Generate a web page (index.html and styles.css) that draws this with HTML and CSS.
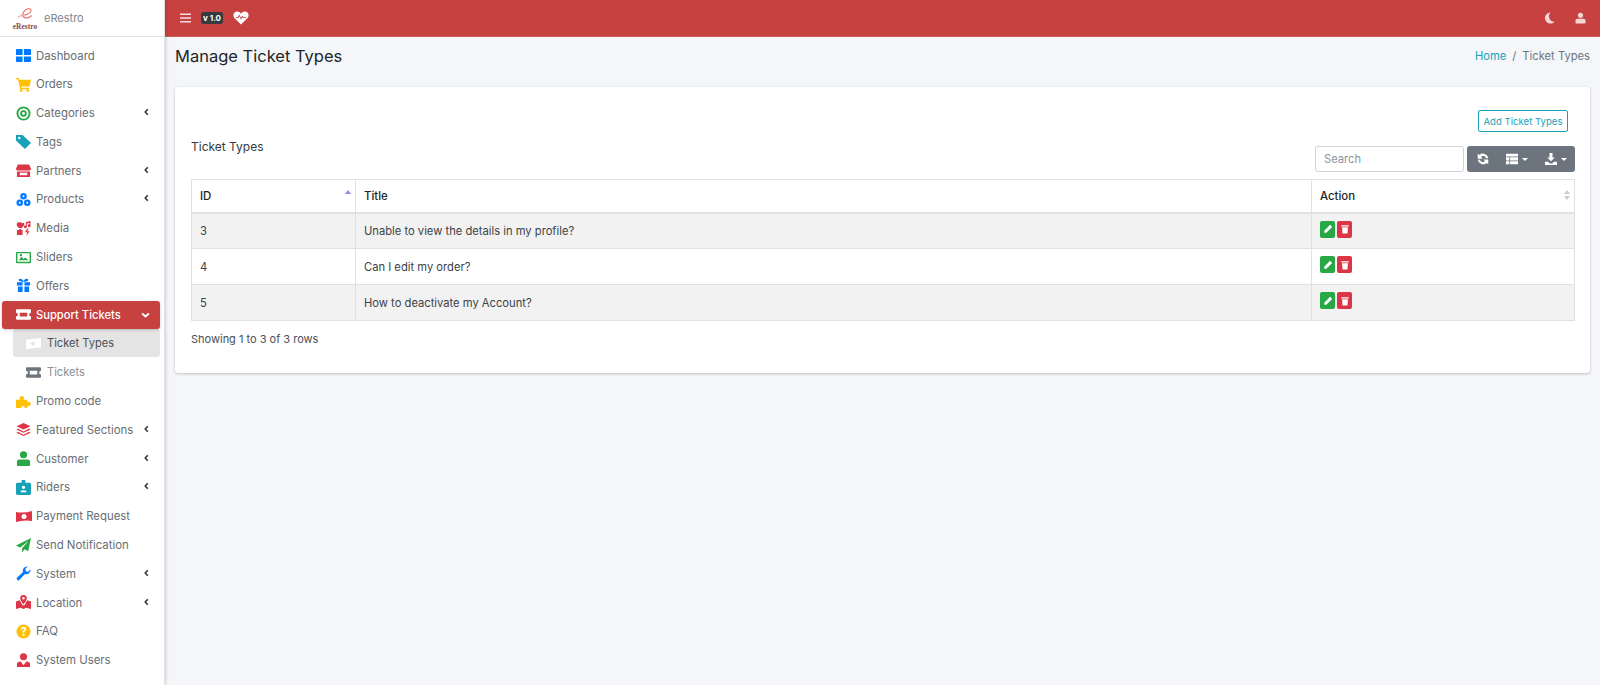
FILE: index.html
```html
<!DOCTYPE html>
<html lang="en">
<head>
<meta charset="utf-8">
<title>Manage Ticket Types</title>
<link rel="stylesheet" href="styles.css">
</head>
<body>
<aside class="sidebar">
  <div class="brand">
    <div class="logo">
      <svg class="logo-mark" viewBox="0 0 24 18"><path d="M6 10c5 1 12-1 13-5 .5-3-4-4-7-1-4 3-5 9 0 10 3 .5 6-1 8-3" fill="none" stroke="#e77a79" stroke-width="1.600"/><path d="M2 13l9-3.500" stroke="#f3b8b7" stroke-width="1.600"/></svg>
      <span class="logo-text">eRestro</span>
    </div>
    <span class="brand-name">eRestro</span>
  </div>
  <nav class="nav">
    <a class="item"><svg class="ic blue" viewBox="0 0 16 16"><path d="M0 2q0-1 1-1h6v6.500H0zM8.500 1H15q1 0 1 1v5.500H8.500zM0 9h7v6H1q-1 0-1-1zM8.500 9H16v5q0 1-1 1H8.500z"/></svg><span>Dashboard</span></a>
    <a class="item"><svg class="ic yellow" viewBox="0 0 16 16"><path d="M0 1h3l.500 2H16l-1.500 7H5.500l.3 1.500H14V13H4.500L2 2.500H0z"/><circle cx="5.500" cy="14.500" r="1.500"/><circle cx="12.500" cy="14.500" r="1.500"/></svg><span>Orders</span></a>
    <a class="item"><svg class="ic green" viewBox="0 0 16 16"><path fill-rule="evenodd" d="M8 .500a7.500 7.500 0 1 1 0 15 7.500 7.500 0 0 1 0-15zm0 2a5.500 5.500 0 1 0 0 11 5.500 5.500 0 0 0 0-11zm0 2a3.500 3.500 0 1 1 0 7 3.500 3.500 0 0 1 0-7zm0 2a1.500 1.500 0 1 0 0 3 1.500 1.500 0 0 0 0-3z"/></svg><span>Categories</span><svg class="chev" viewBox="0 0 8 12"><path d="M6 1.500L2 6l4 4.500" fill="none" stroke-width="2.600"/></svg></a>
    <a class="item"><svg class="ic teal" viewBox="0 0 16 16"><path fill-rule="evenodd" d="M0 1h7l9 8.500L9.500 16 0 7zm3.500 2a1.300 1.300 0 1 0 0 2.600 1.300 1.300 0 0 0 0-2.600z"/></svg><span>Tags</span></a>
    <a class="item"><svg class="ic red" viewBox="0 0 16 16"><path d="M2 1.500h12L16 6q0 2-2 2H2Q0 8 0 6zM1 9h14v6H1zm3 1.500V13h8v-2.500z"/></svg><span>Partners</span><svg class="chev" viewBox="0 0 8 12"><path d="M6 1.500L2 6l4 4.500" fill="none" stroke-width="2.600"/></svg></a>
    <a class="item"><svg class="ic blue" viewBox="0 0 16 16"><path fill-rule="evenodd" d="M8 1a3.500 3.500 0 1 1 0 7 3.500 3.500 0 0 1 0-7zm0 2.500a1 1 0 1 0 0 2 1 1 0 0 0 0-2zM4 8a3.500 3.500 0 1 1 0 7 3.500 3.500 0 0 1 0-7zm0 2.500a1 1 0 1 0 0 2 1 1 0 0 0 0-2zM12 8a3.500 3.500 0 1 1 0 7 3.500 3.500 0 0 1 0-7zm0 2.500a1 1 0 1 0 0 2 1 1 0 0 0 0-2z"/></svg><span>Products</span><svg class="chev" viewBox="0 0 8 12"><path d="M6 1.500L2 6l4 4.500" fill="none" stroke-width="2.600"/></svg></a>
    <a class="item"><svg class="ic red" viewBox="0 0 16 16"><path d="M3.500 1.500C5 1 6 2 6.500 2.500 7 2 8 1 9 3c0 2-2.500 3.500-2.500 4.500L3 7.500 1 5C0 3 2 1 3.500 1.500zM10.500 1l5-1v5a1.500 1.500 0 1 1-1-1.300V2l-3 .6V6a1.500 1.500 0 1 1-1-1.300zM1 9.500h2l1-1h1l1 1h1V15H1zM12 8l-2.500 4H12l-1 4 3.500-5H12l1.500-3z"/></svg><span>Media</span></a>
    <a class="item"><svg class="ic green" viewBox="0 0 16 16"><path fill-rule="evenodd" d="M1 2h14q1 0 1 1v10q0 1-1 1H1q-1 0-1-1V3q0-1 1-1zm.5 1.500v9h13v-9zM3 11l3-4 2 2.500 2-1.500 3 3zm1-5.500a1.300 1.300 0 1 0 0-.1z"/></svg><span>Sliders</span></a>
    <a class="item"><svg class="ic blue" viewBox="0 0 16 16"><path d="M1 4.500h6V8H1zM9 4.500h6V8H9zM2 9h5v6H3q-1 0-1-1zM9 9h5v5q0 1-1 1H9zM8 4C6 4 3 4 3 2.200 3 .5 6 0 8 3.500 10 0 13 .5 13 2.200 13 4 10 4 8 4z"/></svg><span>Offers</span></a>
    <a class="item active"><svg class="ic white" viewBox="0 0 16 16"><path fill-rule="evenodd" d="M1 2.500h14q1 0 1 1V6a2 2 0 0 0 0 4v2.500q0 1-1 1H1q-1 0-1-1V10a2 2 0 0 0 0-4V3.500q0-1 1-1zm3 3.500v4h8V6z"/></svg><span>Support Tickets</span><svg class="chev open" viewBox="0 0 12 8"><path d="M1.500 2L6 6l4.500-4" fill="none" stroke-width="2.600"/></svg></a>
    <div class="sub">
      <a class="sub-item current"><svg class="ic white" viewBox="0 0 16 16"><path fill-rule="evenodd" d="M0 4l16-2v10L0 14zm8 2.200a2 2 0 1 0 0 3.800 2 2 0 0 0 0-3.800z"/></svg><span>Ticket Types</span></a>
      <a class="sub-item"><svg class="ic grey" viewBox="0 0 16 16"><path fill-rule="evenodd" d="M1 2.500h14q1 0 1 1V6a2 2 0 0 0 0 4v2.500q0 1-1 1H1q-1 0-1-1V10a2 2 0 0 0 0-4V3.500q0-1 1-1zm3 3.500v4h8V6z"/></svg><span>Tickets</span></a>
    </div>
    <a class="item"><svg class="ic yellow" viewBox="0 0 16 16"><path d="M0 6h4.500a2 2 0 1 1 3.500-3c.8.800.5 2.200 0 3h4v3.200a2 2 0 1 1 3 2.600 2 2 0 0 1-3 .700V15H9.500a2 2 0 0 0-3.500-1.500c-.5.500-.5 1 0 1.500H0z"/></svg><span>Promo code</span></a>
    <a class="item"><svg class="ic red" viewBox="0 0 16 16"><path d="M8 1l7.500 3.500L8 8 .5 4.500zM2 7l6 3 6-3 1.500 1L8 11.500.5 8zM2 10.500l6 3 6-3 1.500 1L8 15 .5 11.500z"/></svg><span>Featured Sections</span><svg class="chev" viewBox="0 0 8 12"><path d="M6 1.500L2 6l4 4.500" fill="none" stroke-width="2.600"/></svg></a>
    <a class="item"><svg class="ic green" viewBox="0 0 16 16"><circle cx="8" cy="4" r="3.800"/><path d="M3.500 9h9q2.500 0 2.500 2.500V15q0 1-1 1H2q-1 0-1-1v-3.500Q1 9 3.500 9z"/></svg><span>Customer</span><svg class="chev" viewBox="0 0 8 12"><path d="M6 1.500L2 6l4 4.500" fill="none" stroke-width="2.600"/></svg></a>
    <a class="item"><svg class="ic teal" viewBox="0 0 16 16"><path fill-rule="evenodd" d="M1.500 3H6V0h4v3h4.500q1.500 0 1.500 1.500v10q0 1.500-1.500 1.500h-13Q0 16 0 14.500v-10Q0 3 1.500 3zM8 6a1.800 1.800 0 1 0 0 3.600A1.800 1.800 0 0 0 8 6zm-3 7h6v-1.500q-3-1.200-6 0z"/></svg><span>Riders</span><svg class="chev" viewBox="0 0 8 12"><path d="M6 1.500L2 6l4 4.500" fill="none" stroke-width="2.600"/></svg></a>
    <a class="item"><svg class="ic red wide" viewBox="0 0 16 12"><path fill-rule="evenodd" d="M0 1.500Q8 3 16 .5v10Q8 9 0 11.500zM8 3.500a2.500 2.500 0 1 0 0 5 2.500 2.500 0 0 0 0-5z"/></svg><span>Payment Request</span></a>
    <a class="item"><svg class="ic green" viewBox="0 0 16 16"><path d="M16 0l-3 14-4-2-2.500 3.500V11l7-8-9 7L0 8z"/></svg><span>Send Notification</span></a>
    <a class="item"><svg class="ic blue" viewBox="0 0 16 16"><path d="M15.500 3.500a4.500 4.500 0 0 1-6 5L3.500 15a1.800 1.800 0 0 1-2.500-2.500L7.500 6.500a4.500 4.500 0 0 1 5-6L10 3l.5 2.500L13 6z"/></svg><span>System</span><svg class="chev" viewBox="0 0 8 12"><path d="M6 1.500L2 6l4 4.500" fill="none" stroke-width="2.600"/></svg></a>
    <a class="item"><svg class="ic red" viewBox="0 0 16 16"><path fill-rule="evenodd" d="M8 0a3.500 3.500 0 0 1 3.500 3.500C11.500 6 8 10 8 10S4.500 6 4.500 3.500A3.500 3.500 0 0 1 8 0zm0 2.200a1.300 1.300 0 1 0 0 2.600 1.300 1.300 0 0 0 0-2.600zM0 7l4-1.500L7 11h2l3-5.500L16 7v8l-5-1.500L8 15l-3-1.500L0 15z"/></svg><span>Location</span><svg class="chev" viewBox="0 0 8 12"><path d="M6 1.500L2 6l4 4.500" fill="none" stroke-width="2.600"/></svg></a>
    <a class="item"><svg class="ic yellow" viewBox="0 0 16 16"><path fill-rule="evenodd" d="M8 .500a7.500 7.500 0 1 1 0 15 7.500 7.500 0 0 1 0-15zM8 3C6.300 3 5.200 4 5 5.500l1.800.4C7 5 7.300 4.700 8 4.700c.6 0 1 .3 1 .8 0 .6-.5.8-1 1.200-.7.500-1 1-1 2.300h1.800c0-.8.300-1.100 1-1.600.7-.5 1.100-1.100 1.100-2C10.900 4 9.700 3 8 3zM7 10.500v2h2v-2z"/></svg><span>FAQ</span></a>
    <a class="item"><svg class="ic red" viewBox="0 0 16 16"><circle cx="8" cy="4" r="3.800"/><path d="M1 15v-3q0-3 4-3l3 4 3-4q4 0 4 3v3z"/></svg><span>System Users</span></a>
  </nav>
</aside>
<div class="main">
  <header class="topbar">
    <div class="top-left">
      <svg class="bars" viewBox="0 0 12 10"><path d="M0 1h12M0 5h12M0 9h12" stroke-width="1.600"/></svg>
      <span class="version">v 1.0</span>
      <svg class="heart" viewBox="0 0 18 16"><path fill-rule="evenodd" d="M9 15.500L1.500 8C-1 5 .7.500 4.500.500 6.500.500 8 1.500 9 3c1-1.500 2.500-2.500 4.500-2.500C17.300.500 19 5 16.500 8zM3 8h3l1-2 2 4 1.500-3 .8 1H15v-1h-3.200L10.500 5 9 8 7 4 5.400 7H3z"/></svg>
    </div>
    <div class="top-right">
      <svg class="moon" viewBox="0 0 12 12"><path d="M7 0a6 6 0 1 0 4.500 10A6 6 0 0 1 7 0z"/></svg>
      <svg class="user" viewBox="0 0 12 12"><circle cx="6" cy="3" r="2.800"/><path d="M2.500 6.800h7Q11.500 6.800 11.500 9v2q0 1-1 1h-9q-1 0-1-1V9q0-2.200 2-2.200z"/></svg>
    </div>
  </header>
  <main class="content">
    <div class="page-head">
      <h1>Manage Ticket Types</h1>
      <div class="crumbs"><a>Home</a><i>/</i><span>Ticket Types</span></div>
    </div>
    <section class="card">
      <div class="card-actions"><a class="add-btn">Add Ticket Types</a></div>
      <div class="toolbar">
        <h2>Ticket Types</h2>
        <div class="tools">
          <input class="search" type="text" placeholder="Search">
          <div class="btn-group">
            <svg class="tool-ic" viewBox="0 0 16 16"><path d="M15 7A7.200 7.200 0 0 0 3 2.800L1 .8V7.500h6.700L5.300 5.100A4 4 0 0 1 12 7zM1 9a7.200 7.200 0 0 0 12 4.200l2 2V8.500H8.300l2.400 2.400A4 4 0 0 1 4 9z"/></svg>
            <span class="tool-drop"><svg class="tool-ic" viewBox="0 0 16 16"><path d="M0 1h16v3.500H0zM0 5.500h4.500V10H0zM5.500 5.500H16V10H5.500zM0 11h4.500v4H0zM5.500 11H16v4H5.500z"/></svg><b class="caret"></b></span>
            <span class="tool-drop"><svg class="tool-ic" viewBox="0 0 16 16"><path d="M6 0h4v6h3l-5 5-5-5h3zM0 11.500h4L6.500 14h3l2.500-2.500h4V16H0z"/></svg><b class="caret"></b></span>
          </div>
        </div>
      </div>
      <table class="table">
        <thead>
          <tr><th class="c-id">ID<b class="sort up"></b></th><th class="c-title">Title</th><th>Action<b class="sort both"></b></th></tr>
        </thead>
        <tbody>
          <tr class="odd"><td>3</td><td>Unable to view the details in my profile?</td><td class="acts"><a class="act edit"><svg viewBox="0 0 12 12"><path d="M8.500 1l2.500 2.500-7 7H1.500V8z"/></svg></a><a class="act del"><svg viewBox="0 0 12 12"><path d="M1.500 1.500h9V3h-9zM2.500 4h7l-.5 7.500H3z"/></svg></a></td></tr>
          <tr><td>4</td><td>Can I edit my order?</td><td class="acts"><a class="act edit"><svg viewBox="0 0 12 12"><path d="M8.500 1l2.500 2.500-7 7H1.500V8z"/></svg></a><a class="act del"><svg viewBox="0 0 12 12"><path d="M1.500 1.500h9V3h-9zM2.500 4h7l-.5 7.500H3z"/></svg></a></td></tr>
          <tr class="odd"><td>5</td><td>How to deactivate my Account?</td><td class="acts"><a class="act edit"><svg viewBox="0 0 12 12"><path d="M8.500 1l2.500 2.500-7 7H1.500V8z"/></svg></a><a class="act del"><svg viewBox="0 0 12 12"><path d="M1.500 1.500h9V3h-9zM2.500 4h7l-.5 7.500H3z"/></svg></a></td></tr>
        </tbody>
      </table>
      <p class="summary">Showing 1 to 3 of 3 rows</p>
    </section>
  </main>
</div>
</body>
</html>
```

FILE: styles.css
```css
* { box-sizing: border-box; }
html, body { height: 100%; }
body {
  margin: 0;
  display: flex;
  height: 685px;
  overflow: hidden;
  background: #f4f6f9;
  color: #343a40;
  font-family: "Inter", "Open Sans", sans-serif;
  font-size: 12px;
}
.sidebar {
  width: 165px;
  flex: none;
  background: #fff;
  border-right: 1px solid #dfe1e3;
  box-shadow: 1px 0 3px rgba(0, 0, 0, .15);
  position: relative;
  z-index: 2;
}
.brand {
  height: 37px;
  display: flex;
  align-items: center;
  gap: 5px;
  padding-left: 11px;
  border-bottom: 1px solid #dee2e6;
}
.logo { width: 28px; display: flex; flex-direction: column; align-items: center; }
.logo-mark { width: 19px; height: 14px; margin-bottom: 2px; }
.logo-text {
  font-family: "Liberation Serif", serif;
  font-weight: 700;
  font-size: 7.5px;
  line-height: 7px;
  color: #8b4a4a;
}
.brand-name { font-size: 11px; color: #80858b; }
.nav { padding: 4.5px 4px 0 2px; }
.item, .sub-item {
  display: flex;
  align-items: center;
  height: 28px;
  margin-bottom: .8px;
  border-radius: 3px;
  color: #686d74;
  font-size: 11.4px;
}
.item { padding-left: 14px; position: relative; }
.ic { width: 15px; height: 15px; flex: none; margin-right: 5px; }
.ic.wide { width: 16px; margin: 0 4px 0 0; }
.blue { fill: #007bff; }
.yellow { fill: #ffc107; }
.green { fill: #28a745; }
.red { fill: #dc3545; }
.teal { fill: #17a2b8; }
.white { fill: #fff; }
.grey { fill: #6c757d; }
.chev { position: absolute; right: 11px; top: 9px; width: 5px; height: 8px; stroke: #343a40; }
.chev.open { width: 9px; height: 6px; top: 11px; right: 10px; stroke: #fff; }
.item.active {
  background: #c84141;
  color: #fff;
  font-size: 11.2px;
  font-weight: 500;
  box-shadow: 0 1px 3px rgba(0, 0, 0, .2);
}
.sub { padding-left: 11px; }
.sub-item { padding-left: 13px; color: #8b9096; }
.sub-item .ic { margin-right: 6px; }
.sub-item span { font-size: 11.1px; }
.sub-item.current { background: #e4e4e4; color: #4c5056; }
.main { flex: 1; min-width: 0; display: flex; flex-direction: column; }
.topbar {
  height: 37px;
  flex: none;
  display: flex;
  align-items: center;
  justify-content: space-between;
  background: #c84141;
  padding: 0 14px 0 15px;
  border-bottom: 1px solid #cf5f5f;
}
.top-left { display: flex; align-items: center; gap: 10px; }
.bars { width: 11px; height: 10px; stroke: #f6dede; fill: none; }
.version {
  background: #343a40;
  color: #fff;
  border-radius: 3px;
  font-size: 8px;
  font-weight: 700;
  line-height: 12px;
  padding: 0 2px;
  width: 22px;
  text-align: center;
  white-space: nowrap;
}
.heart { width: 16px; height: 14px; fill: #fff; }
.top-right { display: flex; align-items: center; gap: 20px; }
.moon, .user { width: 11px; height: 12px; fill: #f5d5d5; }
.content { flex: 1; padding: 0 10px; }
.page-head {
  height: 38px;
  margin-bottom: 12px;
  display: flex;
  align-items: center;
  justify-content: space-between;
}
h1 { margin: 0; font-weight: 400; font-size: 16.5px; color: #212529; }
.crumbs { font-size: 11.2px; color: #6c757d; display: flex; gap: 6px; }
.crumbs a { color: #17a2b8; }
.crumbs i { font-style: normal; }
.card {
  background: #fff;
  height: 286px;
  border-radius: 3px;
  box-shadow: 0 0 1px rgba(0, 0, 0, .13), 0 1px 3px rgba(0, 0, 0, .2);
  padding: 23px 15px 0 16px;
}
.card-actions { display: flex; justify-content: flex-end; padding-right: 7px; }
.add-btn {
  width: 90px;
  height: 22px;
  border: 1px solid #17a2b8;
  border-radius: 2px;
  color: #17a2b8;
  font-size: 9.6px;
  display: flex;
  align-items: center;
  justify-content: center;
}
.toolbar {
  display: flex;
  justify-content: space-between;
  margin-top: 14px;
  height: 26px;
}
h2 { margin: 0; font-size: 12px; font-weight: 400; color: #343a40; line-height: 0; padding-top: 1px; }
.tools { display: flex; gap: 3px; }
.search {
  width: 149px;
  height: 26px;
  border: 1px solid #ced4da;
  border-radius: 3px;
  padding: 0 8px;
  font: inherit;
  font-size: 11.2px;
  outline: none;
}
.search::placeholder { color: #8d949b; }
.btn-group {
  width: 108px;
  height: 26px;
  background: #6c757d;
  border-radius: 3px;
  display: flex;
  align-items: center;
  justify-content: space-between;
  padding: 0 8px 0 10px;
}
.tool-ic { width: 12px; height: 12px; fill: #fff; flex: none; }
.tool-drop { display: flex; align-items: center; gap: 4px; }
.caret { border: 3.5px solid transparent; border-top-color: #fff; border-bottom: 0; }
.table {
  width: 100%;
  margin-top: 7px;
  border-collapse: collapse;
  table-layout: fixed;
  font-size: 11.2px;
  color: #3c4248;
  border: 1px solid #dee2e6;
}
.table th, .table td { border: 1px solid #dee2e6; padding: 0 8px; text-align: left; }
.table th {
  position: relative;
  height: 33px;
  font-size: 11.4px;
  font-weight: 500;
  color: #212529;
  border-bottom-width: 2px;
}
.table td { height: 36px; }
.c-id { width: 164px; }
.c-title { width: 956px; }
.odd td { background: #f2f2f2; }
.sort { position: absolute; right: 4px; top: 10px; border: 3px solid transparent; border-bottom: 4px solid #8a8ddb; border-top: 0; }
.sort.both { border-bottom-color: #c9cdd1; }
.sort.both::after {
  content: "";
  position: absolute;
  left: -3px;
  top: 6px;
  border: 3px solid transparent;
  border-top: 4px solid #c9cdd1;
  border-bottom: 0;
}
.acts { vertical-align: top; padding-top: 7px !important; }
.act {
  display: inline-flex;
  align-items: center;
  justify-content: center;
  vertical-align: top;
  width: 15px;
  height: 17px;
  margin-right: 2px;
  border-radius: 2px;
}
.act svg { width: 10px; height: 10px; fill: #fff; }
.edit { background: #28a745; }
.del { background: #dc3545; }
.summary { margin: 0; padding-top: 11px; font-size: 11px; color: #4a5056; }
```
